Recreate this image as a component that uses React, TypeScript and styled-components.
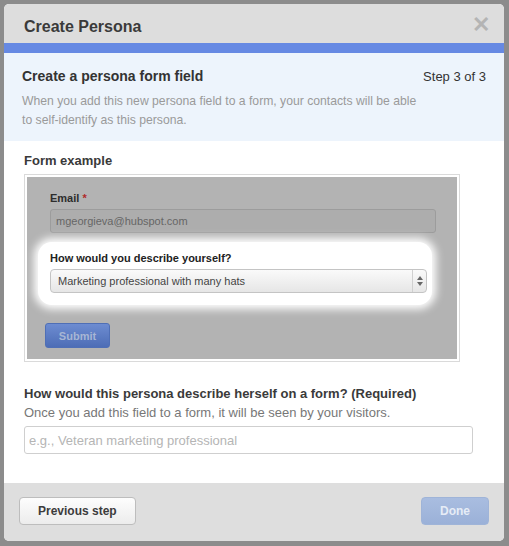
import React from "react";
import styled, { createGlobalStyle } from "styled-components";

const Global = createGlobalStyle`
  html, body { margin: 0; padding: 0; background: #8c8c8c; }
  body { font-family: "Liberation Sans", Arial, sans-serif; }
  * { box-sizing: border-box; }
`;

const Page = styled.div`
  width: 509px;
  height: 546px;
  padding: 4px 5px 5px 4px;
`;

const Dialog = styled.div`
  width: 500px;
  height: 537px;
  border-radius: 5px;
  overflow: hidden;
  background: #fff;
  display: flex;
  flex-direction: column;
`;

const Header = styled.div`
  height: 39px;
  background: #dddddd;
  display: flex;
  align-items: center;
  justify-content: space-between;
  padding: 0 14px 0 20px;
  border-bottom: 10px solid #6689e3;
  box-sizing: content-box;
`;

const Title = styled.h1`
  margin: 0;
  font-size: 16px;
  font-weight: bold;
  color: #3a3a3a;
  padding-top: 6px;
`;

const Close = styled.span`
  font-size: 22px;
  font-weight: bold;
  color: #b4b4b4;
  line-height: 1;
  padding-top: 2px;
`;

const Intro = styled.div`
  background: #edf4fc;
  padding: 15px 18px 11px 18px;
`;

const IntroTop = styled.div`
  display: flex;
  justify-content: space-between;
  align-items: baseline;
`;

const IntroTitle = styled.div`
  font-size: 14px;
  font-weight: bold;
  color: #333;
`;

const Step = styled.div`
  font-size: 13px;
  color: #333;
`;

const IntroText = styled.p`
  margin: 8px 0 0;
  font-size: 12.2px;
  line-height: 19px;
  color: #9a9a9a;
  width: 398px;
`;

const Body = styled.div`
  flex: 1;
  padding: 12px 20px 0 20px;
`;

const SectionLabel = styled.div`
  font-size: 13px;
  font-weight: bold;
  color: #3a3a3a;
`;

const ExampleFrame = styled.div`
  margin-top: 6px;
  width: 436px;
  border: 1px solid #dadada;
  padding: 2px;
`;

const ExampleInner = styled.div`
  background: #b3b3b3;
  height: 182px;
  padding: 15px 0 0 11px;
  display: flex;
  flex-direction: column;
`;

const FieldLabel = styled.div`
  font-size: 11px;
  font-weight: bold;
  color: #2d2d2d;
  margin-left: 12px;
`;

const Req = styled.span`
  color: #b02a2a;
`;

const FakeInput = styled.div`
  margin: 5px 0 0 12px;
  width: 386px;
  height: 24px;
  border: 1px solid #9c9c9c;
  border-radius: 3px;
  background: #adadad;
  font-size: 11px;
  color: #666;
  padding: 0 5px;
  display: flex;
  align-items: center;
`;

const Glow = styled.div`
  margin-top: 9px;
  width: 394px;
  height: 63px;
  background: #fff;
  border-radius: 14px;
  box-shadow: 0 0 8px 4px #fff;
  padding: 10px 5px 0 12px;
`;

const GlowLabel = styled.div`
  font-size: 11px;
  font-weight: bold;
  color: #222;
`;

const Select = styled.div`
  margin-top: 5px;
  height: 24px;
  width: 377px;
  border: 1px solid #c4c4c4;
  border-radius: 4px;
  background: linear-gradient(#fafafa, #e6e6e6);
  display: flex;
  align-items: stretch;
  font-size: 11px;
  color: #444;
`;

const SelectText = styled.div`
  flex: 1;
  padding-left: 7px;
  display: flex;
  align-items: center;
`;

const SelectArrow = styled.div`
  width: 14px;
  border-left: 1px solid #d0d0d0;
  display: flex;
  align-items: center;
  justify-content: center;
`;

const Submit = styled.div`
  margin: 18px 0 0 7px;
  width: 65px;
  height: 25px;
  border-radius: 3px;
  border: 1px solid #4f6fb6;
  background: linear-gradient(#6d8cd1, #4d6db6);
  color: #a7b6d4;
  font-size: 11px;
  font-weight: bold;
  display: flex;
  align-items: center;
  justify-content: center;
`;

const Question = styled.div`
  margin-top: 24px;
  font-size: 13px;
  font-weight: bold;
  color: #3a3a3a;
`;

const Help = styled.div`
  margin-top: 4px;
  font-size: 13px;
  color: #777;
`;

const TextInput = styled.input`
  margin-top: 6px;
  width: 449px;
  height: 28px;
  border: 1px solid #cfcfcf;
  border-radius: 3px;
  padding: 0 4px;
  font-family: "Liberation Sans", Arial, sans-serif;
  font-size: 13px;
  color: #333;
  outline: none;
  &::placeholder { color: #b5b5b5; }
`;

const Footer = styled.div`
  height: 58px;
  background: #dedede;
  display: flex;
  align-items: center;
  justify-content: space-between;
  padding: 0 15px;
`;

const Button = styled.button<{ $primary?: boolean }>`
  height: 28px;
  padding: 0 18px;
  border-radius: 4px;
  font-family: "Liberation Sans", Arial, sans-serif;
  font-size: 12px;
  font-weight: bold;
  border: 1px solid ${(p) => (p.$primary ? "#9fb4d8" : "#bdbdbd")};
  background: ${(p) =>
    p.$primary ? "linear-gradient(#a9bde0, #9bb1d8)" : "linear-gradient(#fdfdfd, #ececec)"};
  color: ${(p) => (p.$primary ? "#e6ecf6" : "#3c3c3c")};
  margin-bottom: 2px;
`;

export default function App() {
  return (
    <>
      <Global />
      <Page>
        <Dialog>
          <Header>
            <Title>Create Persona</Title>
            <Close>✕</Close>
          </Header>
          <Intro>
            <IntroTop>
              <IntroTitle>Create a persona form field</IntroTitle>
              <Step>Step 3 of 3</Step>
            </IntroTop>
            <IntroText>
              When you add this new persona field to a form, your contacts will be able to
              self-identify as this persona.
            </IntroText>
          </Intro>
          <Body>
            <SectionLabel>Form example</SectionLabel>
            <ExampleFrame>
              <ExampleInner>
                <FieldLabel>
                  Email <Req>*</Req>
                </FieldLabel>
                <FakeInput>mgeorgieva@hubspot.com</FakeInput>
                <Glow>
                  <GlowLabel>How would you describe yourself?</GlowLabel>
                  <Select>
                    <SelectText>Marketing professional with many hats</SelectText>
                    <SelectArrow>
                      <svg width="6" height="10" viewBox="0 0 6 10">
                        <path d="M0 4 L3 0 L6 4 Z M0 6 L3 10 L6 6 Z" fill="#666" />
                      </svg>
                    </SelectArrow>
                  </Select>
                </Glow>
                <Submit>Submit</Submit>
              </ExampleInner>
            </ExampleFrame>
            <Question>How would this persona describe herself on a form? (Required)</Question>
            <Help>Once you add this field to a form, it will be seen by your visitors.</Help>
            <TextInput placeholder="e.g., Veteran marketing professional" />
          </Body>
          <Footer>
            <Button>Previous step</Button>
            <Button $primary>Done</Button>
          </Footer>
        </Dialog>
      </Page>
    </>
  );
}
